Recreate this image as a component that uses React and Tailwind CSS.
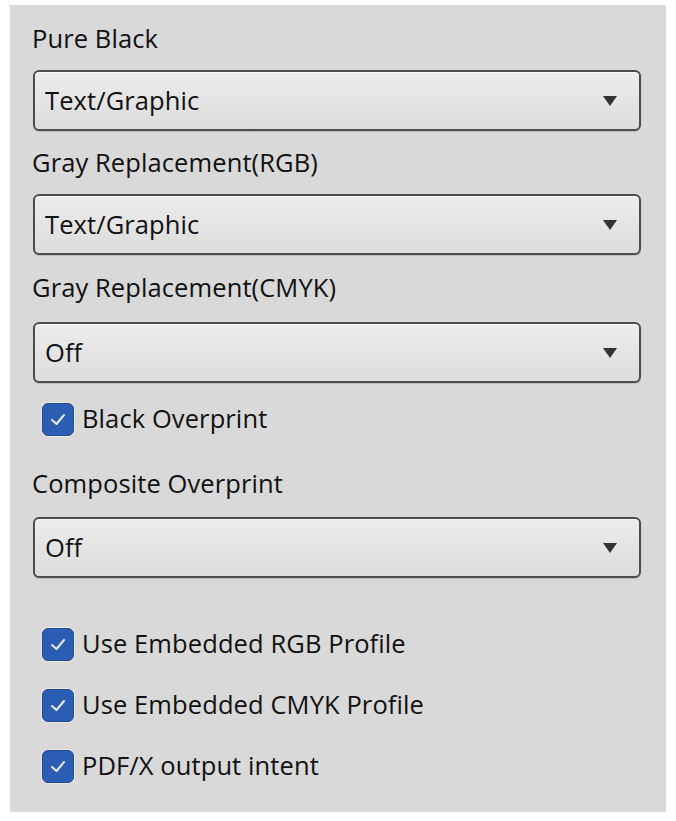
import React from "react";

const font = { fontFamily: '"Open Sans", "Noto Sans", sans-serif' };

function Label({ children, className = "" }) {
  return (
    <div className={"h-[30px] flex items-center text-[25.5px] font-medium leading-none text-[#111] tracking-[0.1px] " + className}>
      {children}
    </div>
  );
}

function Select({ value, className = "" }) {
  return (
    <div
      className={
        "w-[608px] h-[61px] ml-[1px] rounded-[6px] border-2 border-[#4d4d4d] bg-gradient-to-b from-[#ededed] to-[#dcdcdc] shadow-[inset_0_1px_0_#fafafa,0_1px_1px_rgba(0,0,0,0.15)] flex items-center justify-between pl-[10px] pr-[22px] " +
        className
      }
    >
      <span className="text-[25.5px] font-medium leading-none text-[#111] tracking-[0.1px]">{value}</span>
      <svg width="14" height="10" viewBox="0 0 14 10">
        <polygon points="0,0 14,0 7,10" fill="#333" />
      </svg>
    </div>
  );
}

function Check({ label, className = "" }) {
  return (
    <div className={"flex items-center h-[34px] " + className}>
      <div className="ml-[10px] w-[32px] h-[33px] rounded-[6px] bg-[#2b5eb2] border border-[#1d4b9a] shadow-[0_0_0_1px_rgba(255,240,210,0.6)] flex items-center justify-center">
        <svg width="20" height="16" viewBox="0 0 20 16">
          <polyline points="4,9 8.5,13 16,4" fill="none" stroke="#e6edf8" strokeWidth="2" strokeLinecap="round" strokeLinejoin="round" />
        </svg>
      </div>
      <span className="ml-[8px] text-[25.5px] font-medium leading-none text-[#111] tracking-[0.1px]">{label}</span>
    </div>
  );
}

export default function App() {
  return (
    <div className="w-[676px] h-[821px] bg-white pt-[5px] pl-[10px]" style={font}>
      <div className="w-[656px] h-[807px] bg-[#d9d9d9] pl-[22px] pt-[19px] flex flex-col">
        <Label>Pure Black</Label>
        <Select value="Text/Graphic" className="mt-[16px]" />
        <Label className="mt-[17px]">Gray Replacement(RGB)</Label>
        <Select value="Text/Graphic" className="mt-[16px]" />
        <Label className="mt-[18px]">Gray Replacement(CMYK)</Label>
        <Select value="Off" className="mt-[19px]" />
        <Check label="Black Overprint" className="mt-[19px]" />
        <Label className="mt-[33px]">Composite Overprint</Label>
        <Select value="Off" className="mt-[18px]" />
        <Check label="Use Embedded RGB Profile" className="mt-[49px]" />
        <Check label="Use Embedded CMYK Profile" className="mt-[27px]" />
        <Check label="PDF/X output intent" className="mt-[27px]" />
      </div>
    </div>
  );
}
